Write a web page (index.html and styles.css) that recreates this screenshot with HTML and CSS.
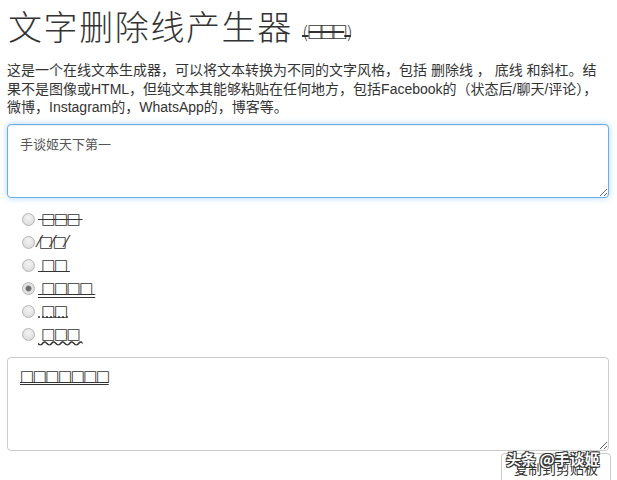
FILE: index.html
```html
<!DOCTYPE html>
<html lang="zh-CN">
<head>
    <meta charset="UTF-8">
    <meta name="viewport" content="width=device-width, initial-scale=1.0">
    <title>文字删除线产生器</title>
    <link rel="stylesheet" href="styles.css">
</head>
<body>
    <div class="container">
        <h1>文字删除线产生器 <small class="strike">□□□</small></h1>
        <p class="intro">这是一个在线文本生成器，可以将文本转换为不同的文字风格，包括 删除线 ， 底线 和斜杠。结果不是图像或HTML，但纯文本其能够粘贴在任何地方，包括Facebook的（状态后/聊天/评论），微博，Instagram的，WhatsApp的，博客等。</p>

        <textarea class="box input-box focused">手谈姬天下第一</textarea>

        <ul class="styles">
            <li><label><input type="radio" name="style"><span class="tofu strike">&nbsp;□□□&nbsp;</span></label></li>
            <li><label><input type="radio" name="style"><span class="tofu">⁄□⁄□⁄</span></label></li>
            <li><label><input type="radio" name="style"><span class="tofu under">&nbsp;□□&nbsp;</span></label></li>
            <li><label><input type="radio" name="style" checked><span class="tofu double">&nbsp;□□□□&nbsp;</span></label></li>
            <li><label><input type="radio" name="style"><span class="tofu dotted">&nbsp;□□&nbsp;</span></label></li>
            <li><label><input type="radio" name="style"><span class="tofu wavy">&nbsp;□□□&nbsp;</span></label></li>
        </ul>

        <div class="box output-box"><span class="tofu double">□□□□□□□</span></div>

        <div class="actions">
            <button type="button">复制到剪贴板</button>
        </div>
    </div>

    <div class="watermark">头条 @手谈姬</div>
</body>
</html>
```

FILE: styles.css
```css
/* Basic styling */
body {
    font-family: "Liberation Sans", "Noto Sans CJK SC", sans-serif;
    color: #333;
    background: #fff;
    margin: 0;
    padding: 0 8px 0 7px;
    overflow: hidden;
}
.container {
    width: 602px;
}
h1 {
    font-family: "Noto Sans CJK SC", sans-serif;
    font-weight: 300;
    font-size: 34px;
    line-height: 40px;
    margin: 6px 0 7px 1px;
    letter-spacing: 1.6px;
}
h1 small {
    font-family: "DejaVu Sans", sans-serif;
    font-size: 23px;
    letter-spacing: -2px;
    position: relative;
    top: -1px;
}
h1 small::before {
    content: "(\2009";
    font-size: 18px;
}
h1 small::after {
    content: "\2009)";
    font-size: 18px;
}
.intro {
    font-size: 14px;
    line-height: 18.5px;
    margin: 0 0 7px;
}
.box {
    display: block;
    box-sizing: border-box;
    width: 602px;
    border: 1px solid #ccc;
    border-radius: 4px;
    padding: 10px 12px;
    font-family: "Noto Sans CJK SC", sans-serif;
    font-size: 13px;
    color: #555;
    background: #fff;
    margin: 0;
}
.input-box {
    height: 74px;
    resize: vertical;
    line-height: 18px;
}
.focused {
    border-color: #66afe9;
    box-shadow: inset 0 1px 1px rgba(0, 0, 0, .075), 0 0 6px rgba(102, 175, 233, .5);
    outline: none;
}
.styles {
    list-style: none;
    margin: 10px 0 11px;
    padding: 0 0 0 15px;
}
.styles li {
    height: 23px;
}
.styles label {
    display: flex;
    align-items: center;
    gap: 1px;
    height: 23px;
}
.styles input {
    appearance: none;
    margin: 0 2px 0 0;
    width: 13px;
    height: 13px;
    border: 1px solid #b5b5b5;
    border-radius: 50%;
    background: radial-gradient(circle at 50% 35%, #f4f4f4, #d6d6d6);
}
.styles input:checked {
    background: radial-gradient(circle, #666 0, #777 2.5px, #e6e6e6 3.5px, #d4d4d4);
}
.tofu {
    font-family: "DejaVu Sans", sans-serif;
    font-size: 15px;
    letter-spacing: -1.5px;
    color: #333;
}
.strike {
    text-decoration: line-through;
}
.under {
    text-decoration: underline;
}
.double {
    text-decoration: underline double;
}
.dotted {
    text-decoration: underline dotted;
}
.wavy {
    text-decoration: underline wavy;
}
.output-box {
    height: 94px;
    resize: vertical;
    overflow: auto;
    padding-top: 8px;
}
.actions {
    display: flex;
    justify-content: flex-end;
    margin: 2px -2px 0 0;
}
button {
    font-family: "Noto Sans CJK SC", sans-serif;
    font-size: 14px;
    color: #333;
    background: #fff;
    border: 1px solid #ccc;
    border-radius: 4px;
    padding: 4px 12px;
    width: 110px;
}
.watermark {
    position: absolute;
    left: 506px;
    top: 448px;
    font-family: "Noto Sans CJK SC", sans-serif;
    font-size: 15px;
    font-weight: 700;
    color: #fff;
    text-shadow: -1px -1px 0 #333, 1px -1px 0 #333, -1px 1px 0 #333, 1px 1px 0 #333;
}
```
